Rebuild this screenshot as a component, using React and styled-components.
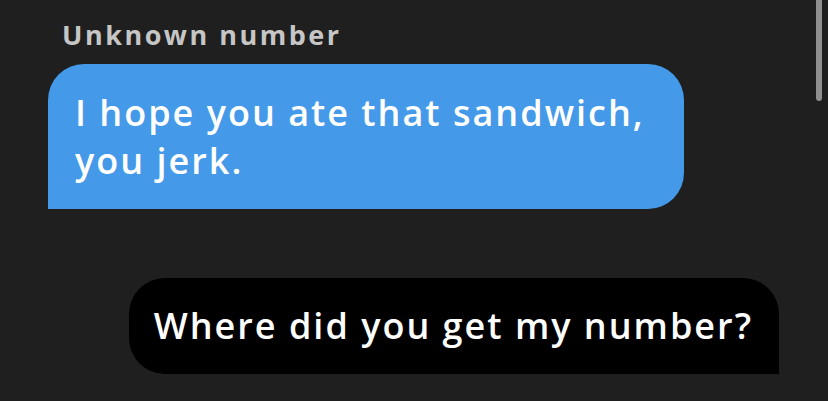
import React from 'react';
import styled, { createGlobalStyle } from 'styled-components';

const GlobalStyle = createGlobalStyle`
  html, body {
    margin: 0;
    padding: 0;
    background: #1f1f1f;
    overflow: hidden;
  }
`;

const Thread = styled.div`
  display: flex;
  flex-direction: column;
  width: 828px;
  height: 401px;
  padding-top: 17px;
  box-sizing: border-box;
  font-family: 'Open Sans', 'DejaVu Sans', sans-serif;
`;

const SenderName = styled.div`
  margin-left: 62px;
  margin-bottom: 11px;
  font-size: 27px;
  font-weight: 700;
  line-height: 36px;
  color: #c6c6c6;
  letter-spacing: 2.5px;
`;

const Bubble = styled.div`
  box-sizing: border-box;
  font-size: 36px;
  font-weight: 600;
  line-height: 48px;
  letter-spacing: 2px;
  color: #ffffff;
  align-self: ${(p) => (p.$outgoing ? 'flex-end' : 'flex-start')};
  background: ${(p) => (p.$outgoing ? '#000000' : '#4499e9')};
  border-radius: ${(p) => (p.$outgoing ? '36px 36px 0 36px' : '36px 36px 36px 0')};
  margin: ${(p) => (p.$outgoing ? '69px 49px 0 0' : '0 0 0 48px')};
  padding: ${(p) => (p.$outgoing ? '24px 26px 24px 25px' : '25px 27px 24px 27px')};
  width: ${(p) => (p.$outgoing ? 'auto' : '636px')};
`;

const ScrollThumb = styled.div`
  position: fixed;
  top: -4px;
  right: 6px;
  width: 6px;
  height: 105px;
  border-radius: 3px;
  background: #8f8f8f;
`;

export default function App() {
  return (
    <>
      <GlobalStyle />
      <Thread>
        <SenderName>Unknown number</SenderName>
        <Bubble>I hope you ate that sandwich, you jerk.</Bubble>
        <Bubble $outgoing>Where did you get my number?</Bubble>
      </Thread>
      <ScrollThumb />
    </>
  );
}
